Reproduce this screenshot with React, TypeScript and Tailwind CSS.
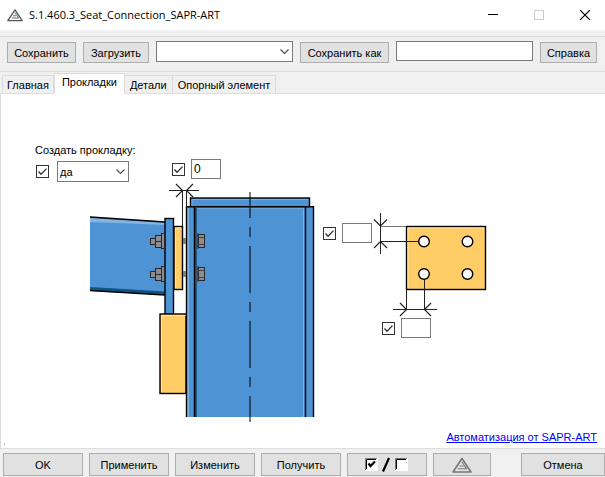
import React, { useState } from 'react';
import clsx from 'clsx';

const TABS = ['Главная', 'Прокладки', 'Детали', 'Опорный элемент'];

const buttonClass =
  'flex items-center justify-center border border-[#adadad] bg-[#e1e1e1] whitespace-nowrap hover:border-[#0078d7] hover:bg-[#e5f1fb]';

const LogoIcon: React.FC<{ className?: string }> = ({ className }) => (
  <svg viewBox="0 0 20 16" className={className} fill="none" aria-hidden="true">
    <path d="M10 1.5 L19 15 H1 Z" stroke="currentColor" strokeWidth="1.6" strokeLinejoin="round" />
    <path d="M10 5 L14.5 11.8 H6 M7.5 9 H11.5" stroke="currentColor" strokeWidth="1.1" />
  </svg>
);

interface ComboProps {
  label: string;
  className: string;
  options: string[];
}

const Combo: React.FC<ComboProps> = ({ label, className, options }) => (
  <div className={clsx('relative h-[21px]', className)}>
    <select
      aria-label={label}
      className="block h-full w-full appearance-none rounded-none border border-[#7a7a7a] bg-white pl-[2px] pr-4 outline-none"
    >
      {options.map((option) => (
        <option key={option}>{option}</option>
      ))}
    </select>
    <svg
      viewBox="0 0 9 6"
      className="pointer-events-none absolute right-1 top-2 h-[6px] w-[9px]"
      fill="none"
      aria-hidden="true"
    >
      <path d="M0.5 0.5 L4.5 4.5 L8.5 0.5" stroke="#505050" strokeWidth="1.2" />
    </svg>
  </div>
);

const CheckBox: React.FC<{ label: string }> = ({ label }) => (
  <span className="relative block size-[13px] shrink-0">
    <input
      type="checkbox"
      defaultChecked
      aria-label={label}
      className="peer block size-[13px] appearance-none border border-[#333333] bg-white"
    />
    <svg
      viewBox="0 0 13 13"
      className="pointer-events-none absolute inset-0 hidden peer-checked:block"
      fill="none"
      aria-hidden="true"
    >
      <path d="M2.5 6.5 L5 9.2 L10.5 3.6" stroke="#333333" strokeWidth="1.3" />
    </svg>
  </span>
);

interface FieldProps {
  label: string;
  className: string;
  value?: string;
}

// Checkbox with a small numeric box, placed over the drawing
const DimensionField: React.FC<FieldProps> = ({ label, className, value = '' }) => (
  <div className={clsx('absolute flex items-center gap-[6px]', className)}>
    <CheckBox label={`${label}: использовать`} />
    <input
      type="text"
      aria-label={label}
      defaultValue={value}
      className="h-5 w-[30px] border border-[#7a7a7a] bg-white px-[2px] text-[12px] outline-none"
    />
  </div>
);

const Bolt: React.FC<{ y: number }> = ({ y }) => (
  <g transform={`translate(0 ${y})`} stroke="#26262b" strokeWidth="1" fill="#8c8c91">
    <rect x="150.5" y="-2.5" width="5" height="6" />
    <rect x="155.5" y="-5.5" width="6" height="12" />
    <path d="M155.5 0.5 H161.5" />
    <rect x="161.5" y="-7.5" width="3" height="15" />
    <rect x="183" y="-3" width="3" height="6" fill="#7d7d7d" stroke="none" />
    <rect x="196.5" y="-7.5" width="1.5" height="15" fill="#33536e" stroke="#33536e" />
    <rect x="198.5" y="-6.5" width="6" height="13" />
    <path d="M198 -3.5 H204.5 M198 3.5 H204.5" stroke="#404045" />
  </g>
);

const ConnectionDrawing: React.FC = () => (
  <svg viewBox="88 182 400 242" className="h-[242px] w-[400px]" fill="none" role="img" aria-label="Схема узла">
    {/* Beam */}
    <path d="M90 217 L165 222 V295 L90 291 Z" fill="#4e93d3" />
    <path d="M90 218 L165 223 V225 L90 222 Z" fill="#83b4e2" />
    <path d="M90 287 L165 291.5 V295 L90 290.5 Z" fill="#105484" />
    <path d="M90 217 L165 222 M90 290.5 L165 295" stroke="#000" strokeWidth="1.4" />

    {/* End plate, shim and seat */}
    <rect x="165" y="218.5" width="8.5" height="96" fill="#4e93d3" stroke="#000" strokeWidth="1.4" />
    <rect x="174" y="226.5" width="8.5" height="63" fill="#ffcc66" stroke="#000" strokeWidth="1.4" />
    <path d="M175.5 288 V228 H181" stroke="#ffe0a0" />
    <rect x="160" y="314" width="26" height="79.5" fill="#ffcc66" stroke="#000" strokeWidth="1.4" />
    <path d="M161.5 392 V315.5 H186" stroke="#ffe3a8" />

    {/* Column */}
    <rect x="190.5" y="198" width="119" height="9" fill="#4e93d3" stroke="#000" strokeWidth="1.4" />
    <path d="M192 206 V199.5 H308" stroke="#79aee0" />
    <rect x="186" y="207" width="128" height="210" fill="#4e93d3" />
    <rect x="187" y="208" width="2" height="209" fill="#80b2e2" />
    <rect x="195" y="208" width="2" height="209" fill="#175b85" />
    <path d="M198 208.5 H304" stroke="#6da6dc" />
    <rect x="303" y="208" width="1" height="209" fill="#80b2e2" />
    <path d="M186.5 417 V206.8 H313.5 V417" stroke="#000" strokeWidth="1.4" />
    <path d="M194.5 207 V417 M305.5 207 V417" stroke="#000" strokeWidth="1.4" />
    <path
      d="M250 192 V218 M250 227 V237 M250 246 V293 M250 302 V312 M250 321 V368 M250 377 V387 M250 396 V422"
      stroke="#000"
      strokeOpacity="0.5"
      strokeWidth="2"
    />

    <Bolt y={241} />
    <Bolt y={274} />

    {/* Gap dimension */}
    <path d="M169 190.5 H199 M182.5 190 V226 M186.5 190 V207" stroke="#222" />
    <path d="M176 184 L182.5 190.5 L176 197 M193 184 L186.5 190.5 L193 197" stroke="#222" strokeWidth="1.2" />

    {/* Shim plate, front view */}
    <rect x="406.5" y="226.5" width="79" height="63" fill="#ffcc66" stroke="#000" strokeWidth="1.4" />
    <path d="M408 288 V228 H484" stroke="#ffe0a0" />
    <path d="M380.5 213 V254 M380.5 241.5 H419 M393 309.5 H437 M406.5 290 V310 M424.5 279 V310" stroke="#222" />
    <path d="M380.5 226.5 H406" stroke="#777" />
    <path
      d="M374 219.5 L380.5 226 L387 219.5 M374 248 L380.5 241.5 L387 248 M400 303 L406.5 309.5 L400 316 M431 303 L424.5 309.5 L431 316"
      stroke="#222"
      strokeWidth="1.2"
    />
    <g fill="#fff" stroke="#000" strokeWidth="1.4">
      <circle cx="424" cy="241.5" r="5.3" />
      <circle cx="467.5" cy="241.5" r="5.3" />
      <circle cx="424" cy="274" r="5.3" />
      <circle cx="467.5" cy="274" r="5.3" />
    </g>
  </svg>
);

const ToggleAllIcon: React.FC = () => (
  <svg viewBox="0 0 44 16" className="h-4 w-11" fill="none" aria-hidden="true">
    <rect x="0" y="1" width="13" height="13" fill="#fff" />
    <path d="M0.5 13 V1.5 H12" stroke="#777" />
    <path d="M1.5 12 V2.5 H11" stroke="#000" />
    <path d="M3.5 6.5 L5.5 9 L10 4.5" stroke="#000" strokeWidth="2.2" />
    <path d="M24 1 L18 14.5" stroke="#000" strokeWidth="2.2" />
    <rect x="30" y="1" width="13" height="13" fill="#fff" />
    <path d="M30.5 13 V1.5 H42" stroke="#777" />
    <path d="M31.5 12 V2.5 H41" stroke="#000" />
  </svg>
);

const TitleBar: React.FC = () => (
  <header className="flex h-[30px] items-center gap-[6px] bg-white pl-[7px] font-['Open_Sans',sans-serif]">
    <LogoIcon className="h-[14px] w-4 text-[#555]" />
    <h1 className="flex-1 truncate text-[11px] leading-4">S.1.460.3_Seat_Connection_SAPR-ART</h1>
    <button type="button" aria-label="Свернуть" className="flex h-full w-10 items-center justify-center">
      <svg viewBox="0 0 10 10" className="size-[10px]" fill="none">
        <path d="M0 4.5 H10" stroke="#000" />
      </svg>
    </button>
    <button type="button" disabled aria-label="Развернуть" className="flex h-full w-10 items-center justify-center">
      <svg viewBox="0 0 10 10" className="size-[10px]" fill="none">
        <rect x="0.5" y="0.5" width="9" height="9" stroke="#ccc" />
      </svg>
    </button>
    <button type="button" aria-label="Закрыть" className="flex h-full w-10 items-center justify-center">
      <svg viewBox="0 0 10 10" className="size-[10px]" fill="none">
        <path d="M0 0 L10 10 M10 0 L0 10" stroke="#000" strokeWidth="1.2" />
      </svg>
    </button>
  </header>
);

export default function App() {
  const [activeTab, setActiveTab] = useState('Прокладки');

  return (
    <div className="flex min-h-screen flex-col bg-[#f0f0f0] font-['Liberation_Sans',sans-serif] text-[11px] leading-[14px] text-black">
      <TitleBar />

      <div className="mt-[6px] flex h-9 items-start gap-[7px] border-y border-[#dcdcdc] pl-[7px] pr-2 pt-1">
        <button type="button" className={clsx(buttonClass, 'mt-px h-[21px] w-[69px]')}>
          Сохранить
        </button>
        <button type="button" className={clsx(buttonClass, 'mt-px h-[21px] w-[66px]')}>
          Загрузить
        </button>
        <Combo label="Файл настроек" className="min-w-0 flex-1" options={['']} />
        <button type="button" className={clsx(buttonClass, 'mt-px h-[21px] w-[89px]')}>
          Сохранить как
        </button>
        <div className="min-w-0 flex-1">
          <input
            type="text"
            aria-label="Имя файла"
            className="block h-5 w-full border border-[#7a7a7a] bg-white px-1 outline-none"
          />
        </div>
        <button type="button" className={clsx(buttonClass, 'mt-px h-[21px] w-[57px]')}>
          Справка
        </button>
      </div>

      <div role="tablist" className="relative z-10 -mb-px mt-px flex items-end pl-[2px]">
        {TABS.map((tab) => (
          <button
            key={tab}
            type="button"
            role="tab"
            aria-selected={tab === activeTab}
            onClick={() => setActiveTab(tab)}
            className={clsx(
              'border border-[#dcdcdc]',
              tab === activeTab
                ? 'h-[21px] border-b-white bg-white px-[7px] pb-[3px]'
                : 'h-[19px] border-l-0 px-[5px] first:border-l first:px-1'
            )}
          >
            {tab}
          </button>
        ))}
      </div>

      <main role="tabpanel" className="relative flex-1 border-y border-l border-[#dcdcdc] bg-white">
        <div className="relative pb-6 pl-[87px] pt-[88px]">
          <ConnectionDrawing />

          <div className="absolute left-[34px] top-[49px]">
            <span className="block">Создать прокладку:</span>
            <div className="mt-1 flex items-center gap-2 pl-px">
              <CheckBox label="Создать прокладку: использовать" />
              <Combo label="Создать прокладку" className="w-[72px]" options={['да', 'нет']} />
            </div>
          </div>
          <DimensionField label="Зазор" value="0" className="left-[171px] top-[65px]" />
          <DimensionField label="Отступ по вертикали" className="left-[322px] top-[129px]" />
          <DimensionField label="Отступ по горизонтали" className="left-[381px] top-[224px]" />
        </div>
        <span className="absolute bottom-0 left-[2px] text-[#888]">.</span>
        <a href="#" className="absolute bottom-1 right-2 text-[#0000ff] underline">
          Автоматизация от SAPR-ART
        </a>
      </main>

      <footer className="flex gap-[6px] pb-[2px] pl-[3px] pt-1">
        <button type="button" className={clsx(buttonClass, 'h-[23px] w-20')}>
          OK
        </button>
        <button type="button" className={clsx(buttonClass, 'h-[23px] w-20')}>
          Применить
        </button>
        <button type="button" className={clsx(buttonClass, 'h-[23px] w-20')}>
          Изменить
        </button>
        <button type="button" className={clsx(buttonClass, 'h-[23px] w-20')}>
          Получить
        </button>
        <button type="button" aria-label="Переключить все" className={clsx(buttonClass, 'h-[23px] w-20')}>
          <ToggleAllIcon />
        </button>
        <button type="button" aria-label="О программе" className={clsx(buttonClass, 'h-[23px] w-[58px]')}>
          <LogoIcon className="h-4 w-5 text-[#777]" />
        </button>
        <button type="button" className={clsx(buttonClass, 'ml-auto h-[23px] w-[84px]')}>
          Отмена
        </button>
      </footer>
    </div>
  );
}
